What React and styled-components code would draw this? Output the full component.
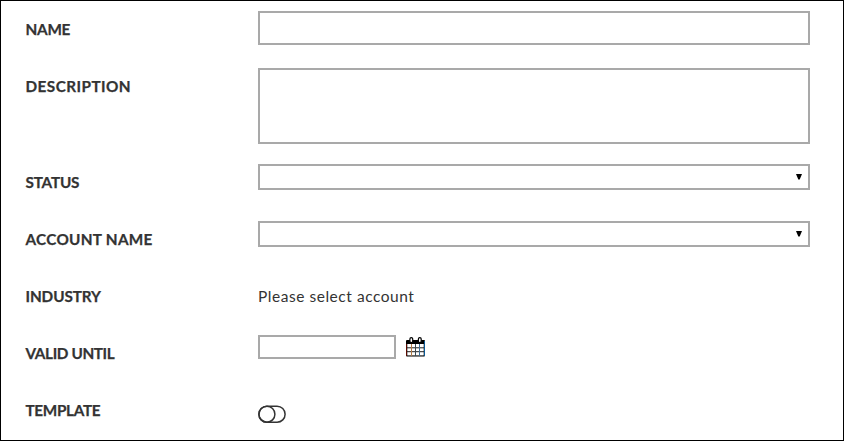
import React from "react";
import styled, { createGlobalStyle } from "styled-components";

const GlobalStyle = createGlobalStyle`
  *, *::before, *::after { box-sizing: border-box; }
  body { margin: 0; background: #fff; }
`;

const Form = styled.form`
  width: 844px;
  height: 441px;
  padding: 0 33px 0 24.5px;
  border: 1px solid #000;
  background: #fff;
  color: #333;
  font-family: Lato, "Liberation Sans", sans-serif;
  overflow: hidden;
`;

const Row = styled.div`
  display: grid;
  grid-template-columns: 232.5px 1fr;
  align-items: start;
  height: ${(p) => (p.$tall ? 96 : 57)}px;
  padding-top: 10px;
`;

const Label = styled.label`
  padding-top: 8px;
  font-size: 15.3px;
  font-weight: 700;
  line-height: 20px;
  letter-spacing: ${(p) => p.$tracking || 0}px;
  -webkit-text-stroke: 0.25px #333;
  white-space: nowrap;
`;

const TextInput = styled.input`
  display: block;
  width: ${(p) => (p.$short ? "138px" : "100%")};
  height: ${(p) => (p.$short ? 24 : 34)}px;
  padding: 0 6px;
  border: 2px solid #a9a9a9;
  border-radius: 0;
  background: #fff;
  outline: none;
`;

const TextArea = styled.textarea`
  display: block;
  width: 100%;
  height: 76px;
  border: 2px solid #a9a9a9;
  background: #fff;
  resize: none;
  outline: none;
`;

const SelectBox = styled.div`
  display: flex;
  align-items: center;
  justify-content: flex-end;
  width: 100%;
  height: 26px;
  padding: 0 6px 1px 0;
  border: 2px solid #a9a9a9;
`;

const Value = styled.span`
  padding-top: 8px;
  font-size: 15.5px;
  line-height: 20px;
  letter-spacing: 0.54px;
  white-space: nowrap;
`;

const DateField = styled.div`
  display: flex;
  gap: 10px;
`;

const CalendarSvg = styled.svg`
  display: block;
  margin-top: 2px;
`;

const ToggleSvg = styled.svg`
  display: block;
  margin-top: 13px;
`;

function Select() {
  return (
    <SelectBox role="combobox" tabIndex={0}>
      <svg width="6" height="6" viewBox="0 0 6 6">
        <path d="M0 0H6L3.7 5.6H2.3Z" fill="#000" />
      </svg>
    </SelectBox>
  );
}

function CalendarIcon() {
  return (
    <CalendarSvg width="19" height="20" viewBox="0 0 19 20">
      <rect x="0" y="3" width="19" height="16.6" rx="1" fill="#000" />
      <rect x="1.3" y="7" width="16.4" height="11.4" fill="#fff" />
      <path d="M0.5 7V19" stroke="#5c0a00" />
      <path d="M18.5 4V19" stroke="#0a5a98" />
      <path d="M1 10.8H18M1 14.7H18" stroke="#222" strokeWidth="1" />
      <path d="M5.5 7V19" stroke="#b07a45" />
      <path d="M9.5 7V19" stroke="#3b4a50" />
      <path d="M13.5 7V19" stroke="#3f6f95" />
      <rect x="3.9" y="0.6" width="2.8" height="5" rx="1.4" fill="#fff" stroke="#000" strokeWidth="1.2" />
      <rect x="12.4" y="0.6" width="2.8" height="5" rx="1.4" fill="#fff" stroke="#000" strokeWidth="1.2" />
    </CalendarSvg>
  );
}

function ToggleIcon() {
  return (
    <ToggleSvg width="28" height="18" viewBox="0 0 28 18" fill="none" stroke="#333" strokeWidth="1.5">
      <rect x="0.9" y="1.2" width="26.2" height="16" rx="8" />
      <circle cx="8.9" cy="9.2" r="8" />
    </ToggleSvg>
  );
}

export default function App() {
  return (
    <>
      <GlobalStyle />
      <Form>
        <Row>
          <Label $tracking={-0.25}>NAME</Label>
          <TextInput />
        </Row>
        <Row $tall>
          <Label $tracking={0.45}>DESCRIPTION</Label>
          <TextArea />
        </Row>
        <Row>
          <Label $tracking={-0.2}>STATUS</Label>
          <Select />
        </Row>
        <Row>
          <Label $tracking={0.29}>ACCOUNT NAME</Label>
          <Select />
        </Row>
        <Row>
          <Label $tracking={-0.1}>INDUSTRY</Label>
          <Value>Please select account</Value>
        </Row>
        <Row>
          <Label $tracking={-0.38}>VALID UNTIL</Label>
          <DateField>
            <TextInput $short />
            <CalendarIcon />
          </DateField>
        </Row>
        <Row>
          <Label $tracking={-0.33}>TEMPLATE</Label>
          <ToggleIcon />
        </Row>
      </Form>
    </>
  );
}
